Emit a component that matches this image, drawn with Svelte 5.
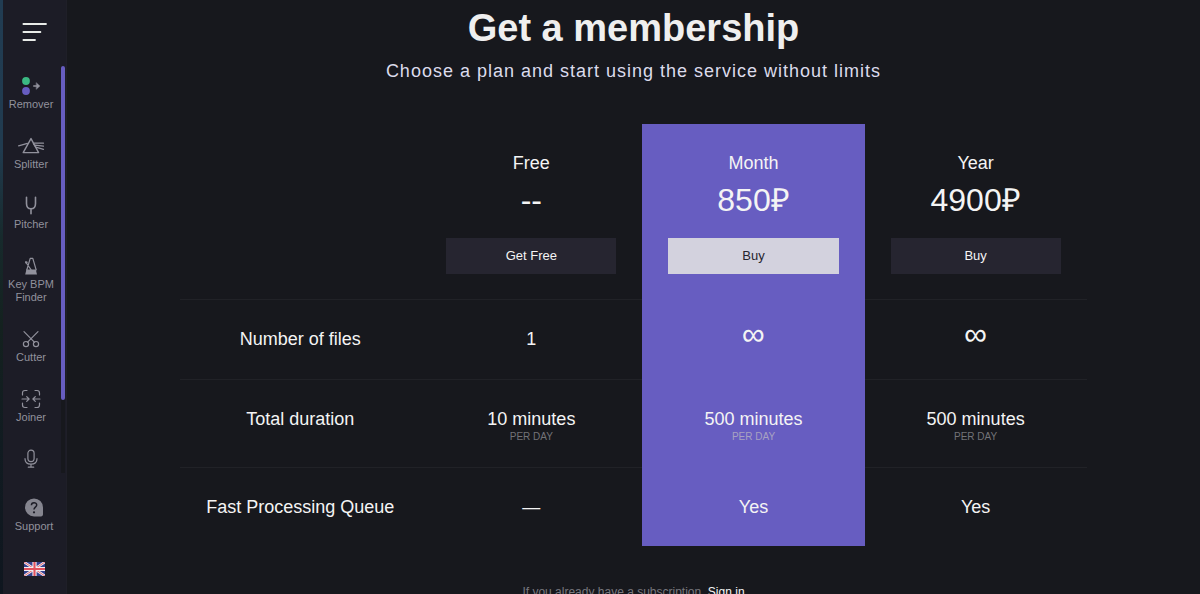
<script>
  const plans = [
    { name: 'Free', price: '--', action: 'Get Free' },
    { name: 'Month', price: '850₽', action: 'Buy', featured: true },
    { name: 'Year', price: '4900₽', action: 'Buy' },
  ];

  const features = [
    { label: 'Number of files', values: ['1', '∞', '∞'] },
    { label: 'Total duration', values: ['10 minutes', '500 minutes', '500 minutes'], note: 'PER DAY' },
    { label: 'Fast Processing Queue', values: ['—', 'Yes', 'Yes'] },
  ];

  const tools = [
    { id: 'remover', label: 'Remover' },
    { id: 'splitter', label: 'Splitter' },
    { id: 'pitcher', label: 'Pitcher' },
    { id: 'bpm', label: 'Key BPM Finder' },
    { id: 'cutter', label: 'Cutter' },
    { id: 'joiner', label: 'Joiner' },
    { id: 'mic', label: '' },
  ];
</script>

<div class="app">
  <aside class="sidebar">
    <button class="toggle" aria-label="Menu">
      <svg width="26" height="20" viewBox="0 0 26 20" fill="none" stroke="#e8ebe8" stroke-width="1.8" stroke-linecap="round">
        <path d="M2.4 2H25M2.4 10H19.4M2.4 18H14" />
      </svg>
    </button>

    <div class="scroller">
      <nav class="tools">
        {#each tools as tool}
          <a class="tool" href="#{tool.id}" aria-label={tool.label || 'Recorder'}>
            <svg class="icon" width="28" height="20" viewBox="0 0 28 20" fill="none" stroke="currentColor" stroke-width="1.2" stroke-linecap="round" stroke-linejoin="round">
              {#if tool.id === 'remover'}
                <circle cx="9" cy="5" r="3.9" fill="#3bb983" stroke="none" />
                <circle cx="9" cy="15" r="3.9" fill="#675dc1" stroke="none" />
                <path d="M16.8 10H21.5" stroke-width="1.6" />
                <path d="M19.4 6.8 22.9 10 19.4 13.2Z" fill="currentColor" stroke-width="0.4" />
              {:else if tool.id === 'splitter'}
                <path d="M14 2.6 6.2 16.6H21.6Z" stroke-width="1.4" />
                <path d="M1.6 9.8 10.4 7.4M17 7.2H26.5M18 9.2 26.5 10.2M18.8 11.2 26.5 13.4M16.4 7.6 18.8 11.2" />
              {:else if tool.id === 'pitcher'}
                <path d="M9.5 1.3V7.5C9.5 11 11.4 12.8 14 12.8S18.5 11 18.5 7.5V1.3M14 12.8V17.7" stroke-width="1.6" />
              {:else if tool.id === 'bpm'}
                <path d="M9.8 14 13.2 2.4H15.8L19.2 14M8.6 6 14 13.6" stroke-width="1.2" />
                <path d="M9.4 13.6H18.8L20 18.4H8.2Z" fill="currentColor" stroke="none" />
                <circle cx="9.4" cy="6.4" r="1.2" fill="currentColor" stroke="none" />
              {:else if tool.id === 'cutter'}
                <path d="M7 2.7 17.6 13.4M21 2.7 10.4 13.4" />
                <circle cx="9" cy="15.1" r="2.6" /><circle cx="19" cy="15.1" r="2.6" />
              {:else if tool.id === 'joiner'}
                <path d="M5.5 6V4C5.5 2.2 6.2 1.5 8 1.5H10M18 1.5H20C21.8 1.5 22.5 2.2 22.5 4V6M22.5 14V16C22.5 17.8 21.8 18.5 20 18.5H18M10 18.5H8C6.2 18.5 5.5 17.8 5.5 16V14M5 10H12M9.7 7.6 12.1 10 9.7 12.4M23 10H16M18.3 7.6 15.9 10 18.3 12.4" />
              {:else}
                <rect x="10.9" y="1.2" width="6.2" height="11.4" rx="3.1" />
                <path d="M8 9.7C8 13.2 10.5 15.1 14 15.1S20 13.2 20 9.7M14 15.1V18.2M11.3 18.2H16.7" />
              {/if}
            </svg>
            <span>{tool.label}</span>
          </a>
        {/each}
      </nav>
      <div class="track"><div class="thumb"></div></div>
    </div>

    <div class="bottom">
      <a class="tool" href="#support">
        <svg width="20" height="20" viewBox="0 0 20 20">
          <path d="M10 0.4A9 9 0 0 1 19 9.4V16.6Q19 18.4 17.2 18.4H10A9 9 0 0 1 10 0.4Z" fill="#85858f" />
          <path d="M7.4 7.2C7.4 3.8 12.7 3.8 12.7 7.1 12.7 9.2 10 9.2 10 11.5" fill="none" stroke="#1c1c26" stroke-width="1.5" />
          <circle cx="10" cy="14.3" r="1.1" fill="#1c1c26" />
        </svg>
        <span>Support</span>
      </a>
      <button class="flag" aria-label="Language">
        <svg width="21" height="14" viewBox="0 0 60 40">
          <path fill="#34418f" d="M0 0H60V40H0Z" />
          <path stroke="#f3eef2" stroke-width="7" d="M0 0 60 40M60 0 0 40" />
          <path stroke="#e0525e" stroke-width="2.5" d="M0 0 60 40M60 0 0 40" />
          <path stroke="#f3eef2" stroke-width="12" d="M30 0V40M0 20H60" />
          <path stroke="#e0525e" stroke-width="6" d="M30 0V40M0 20H60" />
        </svg>
      </button>
    </div>
  </aside>

  <main>
    <h1>Get a membership</h1>
    <p class="lead">Choose a plan and start using the service without limits</p>

    <table>
      <colgroup>
        <col class="label-col" />
        <col /><col /><col />
      </colgroup>
      <thead>
        <tr>
          <td></td>
          {#each plans as plan}
            <th scope="col" class:featured={plan.featured}>
              <div class="plan">
                <span class="name">{plan.name}</span>
                <span class="price">{plan.price}</span>
                <button class="buy">{plan.action}</button>
              </div>
            </th>
          {/each}
        </tr>
      </thead>
      <tbody>
        {#each features as row}
          <tr>
            <th scope="row">{row.label}</th>
            {#each row.values as value, i}
              <td class:featured={plans[i].featured}>
                <span class="value" class:infinite={value === '∞'}>{value}</span>
                {#if row.note}<span class="note">{row.note}</span>{/if}
              </td>
            {/each}
          </tr>
        {/each}
      </tbody>
    </table>

    <p class="signin">If you already have a subscription, <a href="#signin">Sign in</a></p>
  </main>
</div>

<style>
  :global(body) {
    margin: 0;
    background: #17181d;
  }

  .app {
    display: flex;
    height: 100vh;
    overflow: hidden;
    font-family: 'Liberation Sans', Arial, sans-serif;
    color: #f4f4f4;
  }

  button {
    border: 0;
    padding: 0;
    background: none;
    font: inherit;
    color: inherit;
    cursor: pointer;
  }

  a {
    text-decoration: none;
  }

  svg {
    display: block;
  }

  .sidebar {
    flex: none;
    box-sizing: border-box;
    width: 67px;
    display: flex;
    flex-direction: column;
    padding-left: 3px;
    background:
      linear-gradient(#213c52 0, #213b4f 25%, #172a2c 40%, #14211f 55%, #111b21 75%, #0f161f 100%) left / 3px 100% no-repeat,
      #1c1c26;
    border-right: 1px solid #1f1f28;
  }

  .toggle {
    flex: none;
    height: 66px;
    padding: 0 0 2px 18px;
  }

  .scroller {
    flex: 1;
    min-height: 0;
    display: flex;
    overflow: hidden;
  }

  .tools {
    flex: 1;
    display: flex;
    flex-direction: column;
    gap: 25px;
    padding: 10px 2px 0 0;
  }

  .tool {
    display: flex;
    flex-direction: column;
    align-items: center;
    gap: 2px;
    font-size: 11px;
    line-height: 13px;
    text-align: center;
    color: #91919c;
  }

  .track {
    width: 4px;
    margin-right: 1px;
    background: #17181d;
  }

  .thumb {
    height: 82%;
    border-radius: 2px;
    background: #675dc1;
  }

  .bottom {
    flex: none;
    display: flex;
    flex-direction: column;
    align-items: center;
    gap: 29px;
    padding: 25px 1px 18px 0;
  }

  main {
    flex: 1;
    display: flex;
    flex-direction: column;
    align-items: center;
    min-width: 0;
  }

  h1 {
    margin: 6px 0 9px;
    font-size: 38px;
    line-height: 44px;
    color: #efefef;
  }

  .lead {
    margin: 0 0 41px;
    font-size: 18px;
    line-height: 24px;
    letter-spacing: 1px;
    color: #dcdcec;
  }

  table {
    width: 80%;
    max-width: 907px;
    table-layout: fixed;
    border-collapse: separate;
    border-spacing: 0;
    font-size: 18px;
    line-height: 24px;
    text-align: center;
  }

  .label-col {
    width: 240px;
  }

  th,
  td {
    padding: 27px 0 24px;
    border-bottom: 1px solid #212227;
    font-weight: 400;
    vertical-align: top;
  }

  tbody tr:not(:nth-child(2)) > * {
    padding-bottom: 28px;
  }

  tbody tr:last-child > * {
    padding-bottom: 27px;
    border-bottom: 0;
  }

  thead th,
  thead td {
    padding: 27px 26px 25px;
  }

  .featured {
    background: #675dc1;
    border-bottom-color: #675dc1;
  }

  .plan {
    display: flex;
    flex-direction: column;
  }

  .price {
    margin: 5px 0 18px;
    font-size: 32px;
    line-height: 40px;
  }

  .buy {
    height: 36px;
    background: #262530;
    font-size: 13px;
  }

  .featured .buy {
    background: #d3d2de;
    color: #26252f;
  }

  .value,
  .note {
    display: block;
  }

  .infinite {
    font-size: 32px;
    line-height: 14px;
  }

  .note {
    font-size: 10px;
    line-height: 12px;
    color: #737378;
  }

  .featured .note {
    color: #a7a2c2;
  }

  .signin {
    margin: 37px 0 0;
    font-size: 12px;
    line-height: 18px;
    color: #77777d;
  }

  .signin a {
    color: #f4f4f4;
  }
</style>
